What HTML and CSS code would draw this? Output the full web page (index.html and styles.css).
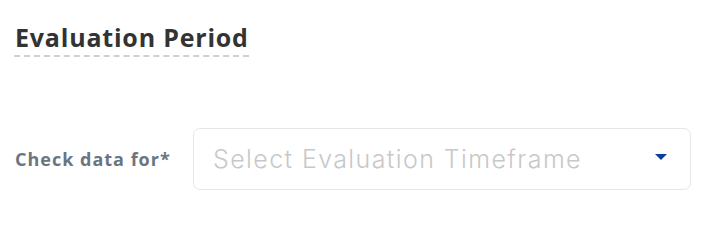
FILE: index.html
```html
<!DOCTYPE html>
<html>
<head>
<meta charset="utf-8">
<link rel="stylesheet" href="styles.css">
</head>
<body>
<div class="page">
  <h2 class="title"><span class="title-text">Evaluation Period</span></h2>
  <div class="field">
    <label class="label">Check data for*</label>
    <div class="select">
      <span class="placeholder">Select Evaluation Timeframe</span>
      <svg class="caret" width="12" height="6" viewBox="0 0 12 6"><path d="M0 0 H12 L6 6 Z" fill="#0b3d9c"/></svg>
    </div>
  </div>
</div>
</body>
</html>
```
FILE: styles.css
```css
html, body {
  margin: 0;
  padding: 0;
  background: #fff;
}
.page {
  width: 722px;
  height: 220px;
  box-sizing: border-box;
  padding: 22px 31px 0 14px;
  font-family: "Open Sans", Lato, sans-serif;
}
.title {
  margin: 0;
  font-size: 25px;
  font-weight: 700;
  letter-spacing: 0.8px;
  color: #333;
  line-height: 30px;
}
.title-text {
  display: inline-block;
  padding-bottom: 3px;
  border-bottom: 2px dashed #d0d0d0;
  padding-left: 1px;
}
.field {
  display: flex;
  align-items: center;
  margin-top: 71px;
}
.label {
  width: 178px;
  padding-left: 1px;
  font-size: 18px;
  font-weight: 700;
  letter-spacing: 1px;
  color: #6b7580;
}
.select {
  flex: 1;
  height: 62px;
  box-sizing: border-box;
  border: 1.5px solid #e6e6e6;
  border-radius: 7px;
  display: flex;
  align-items: center;
  padding: 0 23px 0 19px;
}
.placeholder {
  flex: 1;
  font-family: Inter, "Open Sans", sans-serif;
  font-size: 25px;
  font-weight: 300;
  letter-spacing: 1.4px;
  color: #c8c8c8;
}
.caret {
  display: block;
  margin-top: -4px;
}
```
